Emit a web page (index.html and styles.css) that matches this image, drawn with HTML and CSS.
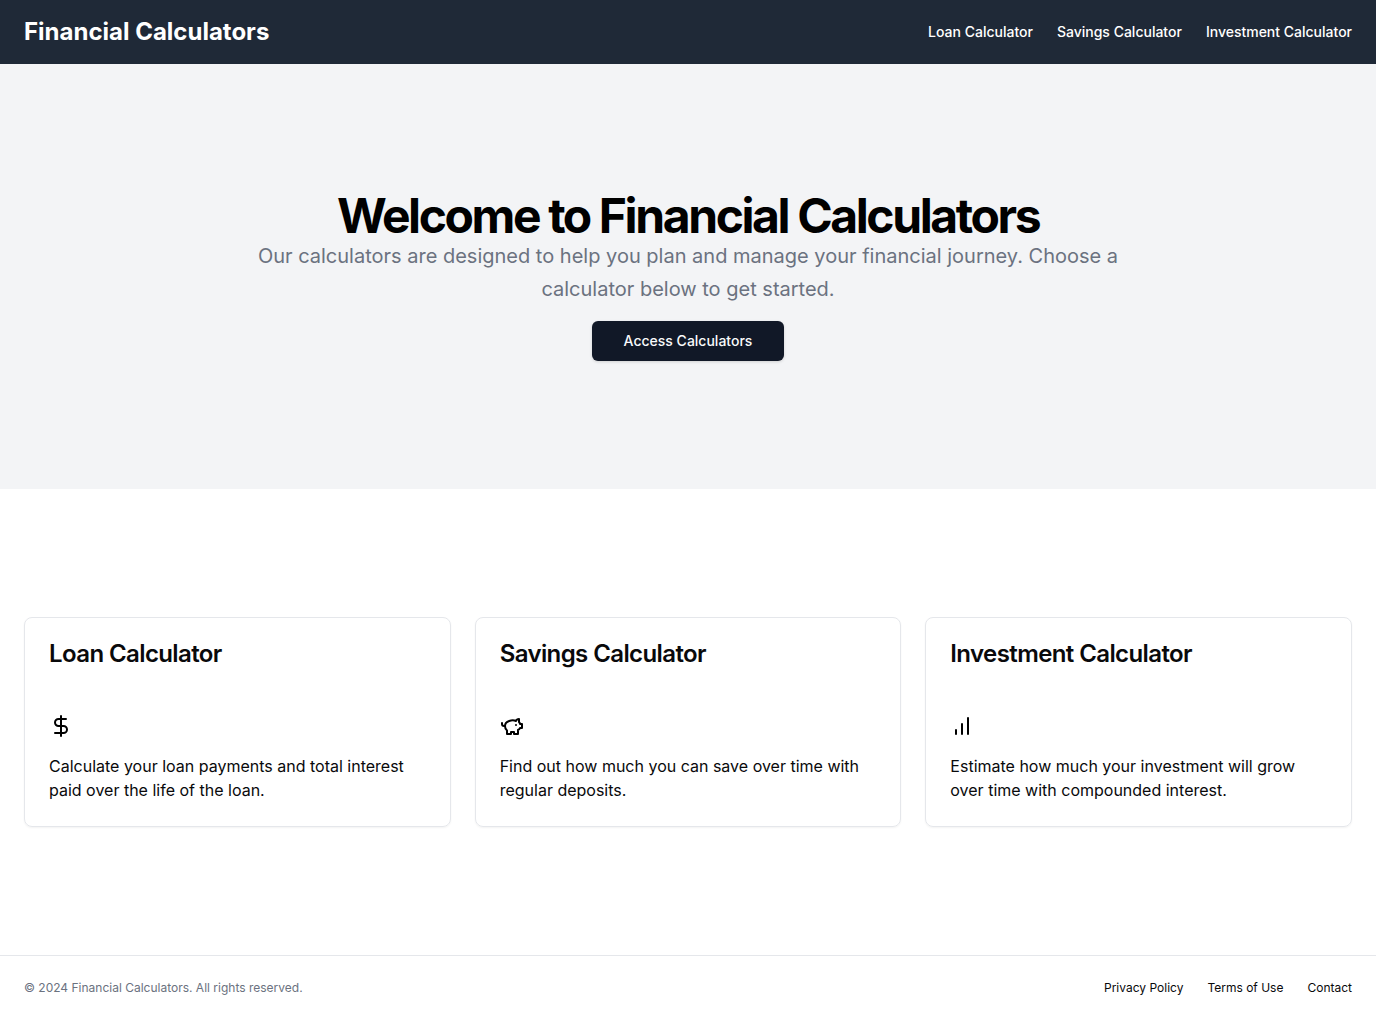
FILE: index.html
```html
<!DOCTYPE html>
<html lang="en">
<head>
<meta charset="utf-8">
<meta name="viewport" content="width=device-width, initial-scale=1">
<title>Financial Calculators</title>
<link rel="stylesheet" href="styles.css">
</head>
<body>
<div class="page">
  <header class="site-header">
    <a class="brand" href="#">Financial Calculators</a>
    <nav class="nav" aria-label="Main">
      <a href="#loan">Loan Calculator</a>
      <a href="#savings">Savings Calculator</a>
      <a href="#investment">Investment Calculator</a>
    </nav>
  </header>
  <main>
    <section class="hero">
      <h1 class="hero-title">Welcome to Financial Calculators</h1>
      <p class="hero-text">Our calculators are designed to help you plan and manage your financial journey. Choose a calculator below to get started.</p>
      <button class="button" type="button">Access Calculators</button>
    </section>
    <section class="cards">
      <article class="card" id="loan">
        <h2 class="card-title">Loan Calculator</h2>
        <div class="card-body">
          <svg class="icon" viewBox="0 0 24 24" aria-hidden="true"><path d="M12 2v20"/><path d="M17 5H9.5a3.5 3.5 0 0 0 0 7h5a3.5 3.5 0 0 1 0 7H6"/></svg>
          <p>Calculate your loan payments and total interest paid over the life of the loan.</p>
        </div>
      </article>
      <article class="card" id="savings">
        <h2 class="card-title">Savings Calculator</h2>
        <div class="card-body">
          <svg class="icon" viewBox="0 0 24 24" aria-hidden="true"><path d="M19 5c-1.5 0-2.8 1.4-3 2-3.5-1.5-11-.3-11 5 0 1.800 0 3 2 4.500V20h4v-2h3v2h4v-4c1-.5 1.700-1 2-2h2v-4h-2c0-1-.5-1.500-1-2V5z"/><path d="M2 9v1c0 1.100.9 2 2 2h1"/><path d="M16 11h.01"/></svg>
          <p>Find out how much you can save over time with regular deposits.</p>
        </div>
      </article>
      <article class="card" id="investment">
        <h2 class="card-title">Investment Calculator</h2>
        <div class="card-body">
          <svg class="icon" viewBox="0 0 24 24" aria-hidden="true"><path d="M12 20V10"/><path d="M18 20V4"/><path d="M6 20v-4"/></svg>
          <p>Estimate how much your investment will grow over time with compounded interest.</p>
        </div>
      </article>
    </section>
  </main>
  <footer class="site-footer">
    <p class="copyright">© 2024 Financial Calculators. All rights reserved.</p>
    <nav class="footer-nav" aria-label="Footer">
      <a href="#privacy">Privacy Policy</a>
      <a href="#terms">Terms of Use</a>
      <a href="#contact">Contact</a>
    </nav>
  </footer>
</div>
</body>
</html>
```
FILE: styles.css
```css
*, *::before, *::after { box-sizing: border-box; }
body, h1, h2, p { margin: 0; }
body {
  background: #fff;
  color: #09090b;
  font-family: Inter, "Liberation Sans", sans-serif;
  font-size: 16px;
  line-height: 24px;
}
a { color: inherit; text-decoration: none; }
.page { display: flex; flex-direction: column; min-height: 100vh; }
main { flex: 1; }
.site-header {
  display: flex;
  align-items: center;
  justify-content: space-between;
  height: 64px;
  padding: 0 24px;
  background: #1f2937;
  color: #fff;
}
.brand { font-size: 24px; line-height: 32px; font-weight: 700; }
.nav, .footer-nav { display: flex; gap: 24px; }
.nav { font-size: 14px; line-height: 20px; font-weight: 500; }
.hero {
  display: flex;
  flex-direction: column;
  align-items: center;
  padding: 128px 24px;
  background: #f3f4f6;
  text-align: center;
}
.hero-title { color: #000; font-size: 48px; line-height: 48px; font-weight: 700; letter-spacing: -0.05em; }
.hero-text { max-width: 900px; color: #6b7280; font-size: 20px; line-height: 33px; }
.button {
  height: 40px;
  margin-top: 15px;
  padding: 0 32px;
  border: 0;
  border-radius: 6px;
  background: #111827;
  color: #f9fafb;
  font: 500 14px/20px Inter, "Liberation Sans", sans-serif;
  box-shadow: 0 1px 3px rgb(0 0 0 / 15%);
}
.cards {
  display: grid;
  grid-template-columns: repeat(3, minmax(0, 1fr));
  gap: 24px;
  padding: 128px 24px;
}
.card {
  border: 1px solid #e5e7eb;
  border-radius: 8px;
  box-shadow: 0 1px 2px rgb(0 0 0 / 5%);
}
.card-title { padding: 24px; font-size: 24px; line-height: 24px; font-weight: 600; letter-spacing: -0.025em; }
.card-body { padding: 24px; }
.icon {
  display: block;
  width: 24px;
  height: 24px;
  margin-bottom: 16px;
  fill: none;
  stroke: #000;
  stroke-width: 2;
  stroke-linecap: round;
  stroke-linejoin: round;
}
.site-footer {
  display: flex;
  align-items: center;
  justify-content: space-between;
  padding: 24px;
  border-top: 1px solid #e5e7eb;
  font-size: 12px;
  line-height: 16px;
}
.copyright { color: #6b7280; }
```
